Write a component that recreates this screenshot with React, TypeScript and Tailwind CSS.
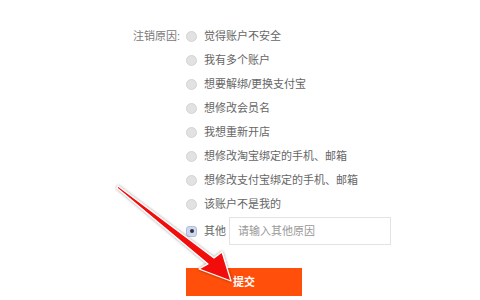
import React from "react";

const options = [
  "觉得账户不安全",
  "我有多个账户",
  "想要解绑/更换支付宝",
  "想修改会员名",
  "我想重新开店",
  "想修改淘宝绑定的手机、邮箱",
  "想修改支付宝绑定的手机、邮箱",
  "该账户不是我的",
];

function Radio() {
  return (
    <span className="w-[11px] h-[11px] rounded-full bg-[#e2e2e2] border border-[#d4d4d4] shrink-0" />
  );
}

export default function App() {
  return (
    <div
      className="relative w-[480px] h-[300px] bg-white overflow-hidden text-[11px] text-[#666]"
      style={{ fontFamily: '"Liberation Sans", "Noto Sans CJK SC", sans-serif' }}
    >
      <div className="flex pt-[24px] pl-[133px]">
        <div className="w-[53px] h-[24px] leading-[24px] text-[#777]">注销原因:</div>
        <div className="flex flex-col">
          {options.map((o) => (
            <div key={o} className="flex items-center h-[24px] gap-[7px]">
              <Radio />
              <span className="leading-[18px]">{o}</span>
            </div>
          ))}
          <div className="flex items-center h-[28px] mt-[1px]">
            <span className="w-[11px] h-[11px] rounded-[3px] bg-[#cfd8f0] border border-[#b0bde0] flex items-center justify-center shrink-0">
              <span className="w-[4px] h-[4px] rounded-full bg-[#333]" />
            </span>
            <span className="ml-[7px]">其他</span>
            <div className="ml-[3px] w-[162px] h-[28px] border border-[#e3e3e3] flex items-center pl-[8px] text-[#999]">
              请输入其他原因
            </div>
          </div>
          <button className="mt-[23px] w-[116px] h-[28px] bg-[#ff4f0a] text-white font-bold text-[11px] flex items-center justify-center">
            提交
          </button>
        </div>
      </div>
      <svg className="absolute left-0 top-0" width="480" height="300" viewBox="0 0 480 300">
        <defs>
          <filter id="sh" x="-20%" y="-20%" width="140%" height="140%">
            <feDropShadow dx="0" dy="0" stdDeviation="1.5" floodColor="#000" floodOpacity="0.45" />
          </filter>
        </defs>
        <path
          d="M118 186 L214 258 L222 252 L231 281 L199 269 L208 264 L117 188 Z"
          fill="#f20d0d"
          stroke="#ffffff"
          strokeWidth="1.2"
          strokeLinejoin="round"
          filter="url(#sh)"
        />
      </svg>
    </div>
  );
}
